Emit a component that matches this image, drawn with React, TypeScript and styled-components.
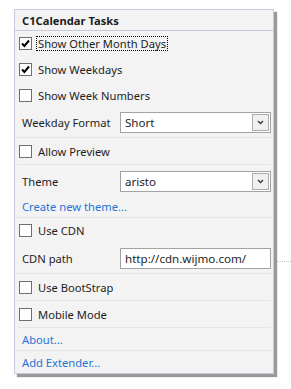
import styled, { createGlobalStyle } from "styled-components";

const GlobalStyle = createGlobalStyle`
  body {
    margin: 0;
    background: #ffffff;
    font-family: "Noto Sans", "Liberation Sans", sans-serif;
  }
`;

const Page = styled.div`
  width: 291px;
  height: 389px;
  padding: 9px 0 0 14px;
  box-sizing: border-box;
`;

const Panel = styled.div`
  position: relative;
  width: 260px;
  height: 365px;
  box-sizing: border-box;
  border: 1px solid #c9c9d9;
  background: #f3f3f3;
  box-shadow: 3px 3px 1px rgba(0, 0, 0, 0.4);
  display: flex;
  flex-direction: column;
  color: #1e1e1e;
  font-size: 11.2px;
`;

const Title = styled.div`
  height: 20px;
  border-bottom: 1px solid #c9c9d9;
  padding-left: 7px;
  display: flex;
  align-items: center;
  font-weight: 700;
`;

const Row = styled.div<{ $h: number; $sep?: boolean; $top?: number }>`
  height: ${(p) => p.$h}px;
  flex: none;
  display: flex;
  align-items: ${(p) => (p.$top !== undefined ? "flex-start" : "center")};
  padding: ${(p) => (p.$top !== undefined ? `${p.$top}px 0 0 7px` : "0 0 0 7px")};
  box-sizing: content-box;
  position: relative;
  ${(p) =>
    p.$sep &&
    `
    &::after {
      content: "";
      position: absolute;
      left: 2px;
      right: 2px;
      bottom: -1px;
      height: 1px;
      background: #e4e4e4;
    }
    margin-bottom: 1px;
  `}
`;

const CheckRow = styled(Row)`
  padding-left: 4px;
  gap: 5px;
`;

const Box = styled.span`
  width: 11px;
  height: 11px;
  border: 1px solid #6e6e6e;
  background: #ffffff;
  display: flex;
  align-items: center;
  justify-content: center;
  flex: none;
`;

const CheckText = styled.span<{ $focus?: boolean }>`
  padding: 0 1px;
  line-height: 13px;
  outline: ${(p) => (p.$focus ? "1px dotted #000" : "none")};
  outline-offset: 0;
`;

const Label = styled.span`
  width: 98px;
  flex: none;
`;

const ThemeLabel = styled(Label)`
  padding-top: 3px;
`;

const Select = styled.div`
  width: 151px;
  height: 21px;
  box-sizing: border-box;
  border: 1px solid #a3a3a3;
  background: #ffffff;
  display: flex;
  align-items: center;
  justify-content: space-between;
  padding: 0 1px 0 4px;
  font-size: 11.6px;
`;

const DropButton = styled.span`
  width: 17px;
  height: 17px;
  box-sizing: border-box;
  border: 1px solid #acacac;
  background: #f0f0f0;
  display: flex;
  align-items: center;
  justify-content: center;
`;

const TextInput = styled.div`
  width: 151px;
  height: 21px;
  box-sizing: border-box;
  border: 1px solid #a3a3a3;
  background: #ffffff;
  display: flex;
  align-items: center;
  padding-left: 4px;
  font-size: 11.6px;

  &::after {
    content: "";
    position: absolute;
    left: 262px;
    right: -18px;
    top: 19px;
    border-top: 1px dotted #c4c4c4;
  }
`;

const Link = styled.span`
  color: #1f74d4;
`;

function Check({ checked }: { checked?: boolean }) {
  return (
    <Box>
      {checked && (
        <svg width="9" height="9" viewBox="0 0 9 9">
          <path d="M1 4.5 L3.4 7 L8 1.5" fill="none" stroke="#000" strokeWidth="2" />
        </svg>
      )}
    </Box>
  );
}

function Chevron() {
  return (
    <svg width="7" height="5" viewBox="0 0 7 5">
      <path d="M1 1 L3.5 3.5 L6 1" fill="none" stroke="#3c3c3c" strokeWidth="1.5" />
    </svg>
  );
}

export default function App() {
  return (
    <Page>
      <GlobalStyle />
      <Panel>
        <Title>C1Calendar Tasks</Title>
        <CheckRow $h={25}>
          <Check checked />
          <CheckText $focus>Show Other Month Days</CheckText>
        </CheckRow>
        <CheckRow $h={26}>
          <Check checked />
          <CheckText>Show Weekdays</CheckText>
        </CheckRow>
        <CheckRow $h={26}>
          <Check />
          <CheckText>Show Week Numbers</CheckText>
        </CheckRow>
        <Row $h={29} $sep>
          <Label>Weekday Format</Label>
          <Select>
            Short
            <DropButton>
              <Chevron />
            </DropButton>
          </Select>
        </Row>
        <CheckRow $h={26} $sep>
          <Check />
          <CheckText>Allow Preview</CheckText>
        </CheckRow>
        <Row $h={25} $top={6}>
          <ThemeLabel>Theme</ThemeLabel>
          <Select>
            aristo
            <DropButton>
              <Chevron />
            </DropButton>
          </Select>
        </Row>
        <Row $h={21} $sep>
          <Link>Create new theme...</Link>
        </Row>
        <CheckRow $h={24}>
          <Check />
          <CheckText>Use CDN</CheckText>
        </CheckRow>
        <Row $h={25} $top={6} $sep>
          <ThemeLabel>CDN path</ThemeLabel>
          <TextInput>http://cdn.wijmo.com/</TextInput>
        </Row>
        <CheckRow $h={26} $sep>
          <Check />
          <CheckText>Use BootStrap</CheckText>
        </CheckRow>
        <CheckRow $h={26} $sep>
          <Check />
          <CheckText>Mobile Mode</CheckText>
        </CheckRow>
        <Row $h={22} $sep>
          <Link>About...</Link>
        </Row>
        <Row $h={22}>
          <Link>Add Extender...</Link>
        </Row>
      </Panel>
    </Page>
  );
}
